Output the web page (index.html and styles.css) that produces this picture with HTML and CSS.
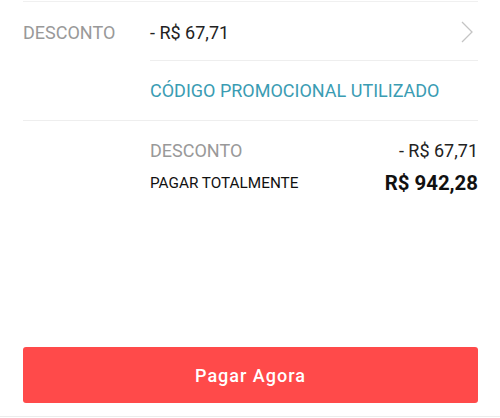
FILE: index.html
```html
<!DOCTYPE html>
<html lang="pt">
<head>
    <meta charset="UTF-8">
    <meta name="viewport" content="width=device-width, initial-scale=1.0">
    <title>Pagamento</title>
    <link rel="stylesheet" href="styles.css">
</head>
<body>
    <div class="page">
        <div class="row discount-row">
            <span class="label">DESCONTO</span>
            <span class="value">- R$ 67,71</span>
            <svg class="chevron" width="12" height="22" viewBox="0 0 12 22">
                <polyline points="1,1 11,11 1,21" fill="none" stroke="#c4c4c4" stroke-width="1.3"/>
            </svg>
        </div>

        <div class="promo">
            <span>CÓDIGO PROMOCIONAL UTILIZADO</span>
        </div>

        <!-- resumo -->
        <div class="summary">
            <div class="summary-line">
                <span class="label">DESCONTO</span>
                <span class="amount">- R$ 67,71</span>
            </div>
            <div class="summary-line total">
                <span class="total-label">PAGAR TOTALMENTE</span>
                <span class="total-amount">R$ 942,28</span>
            </div>
        </div>

        <button type="button" class="pay-btn">Pagar Agora</button>
    </div>
    <div class="bottom-line"></div>
</body>
</html>
```

FILE: styles.css
```css
body {
    font-family: Roboto, "Liberation Sans", sans-serif;
    margin: 0;
    background-color: #fff;
    color: #222;
}
.page {
    padding: 0 22px 0 23px;
    height: 416px;
    box-sizing: border-box;
    display: flex;
    flex-direction: column;
}
.row {
    display: flex;
    align-items: center;
    border-top: 1px solid #f0f0f0;
    margin-top: 1px;
}
.discount-row {
    height: 59px;
    padding-top: 2px;
    box-sizing: border-box;
    font-size: 18px;
}
.label {
    color: #999;
    font-size: 18px;
}
.discount-row .label {
    width: 127px;
}
.discount-row .value {
    flex: 1;
    color: #222;
}
.chevron {
    margin-right: 5px;
}
.promo {
    margin-left: 127px;
    border-top: 1px solid #eeeeee;
    height: 59px;
    display: flex;
    align-items: center;
    color: #3a9cb3;
    font-size: 18px;
}
.summary {
    border-top: 1px solid #eeeeee;
    padding: 16px 0 0 127px;
}
.summary-line {
    display: flex;
    justify-content: space-between;
    align-items: center;
    height: 26px;
}
.amount {
    font-size: 18px;
    color: #222;
}
.total {
    margin-top: 7px;
}
.total-label {
    font-size: 15.3px;
    color: #111;
}
.total-amount {
    font-size: 20.4px;
    font-weight: bold;
    color: #111;
}
.pay-btn {
    margin-top: auto;
    margin-bottom: 13px;
    height: 56px;
    width: 100%;
    border: none;
    border-radius: 3px;
    background-color: #ff4a4a;
    color: #fff;
    font-family: Roboto, "Liberation Sans", sans-serif;
    font-size: 18px;
    font-weight: 500;
    letter-spacing: 1px;
    cursor: pointer;
}
.bottom-line {
    border-top: 1px solid #ececec;
}
```
